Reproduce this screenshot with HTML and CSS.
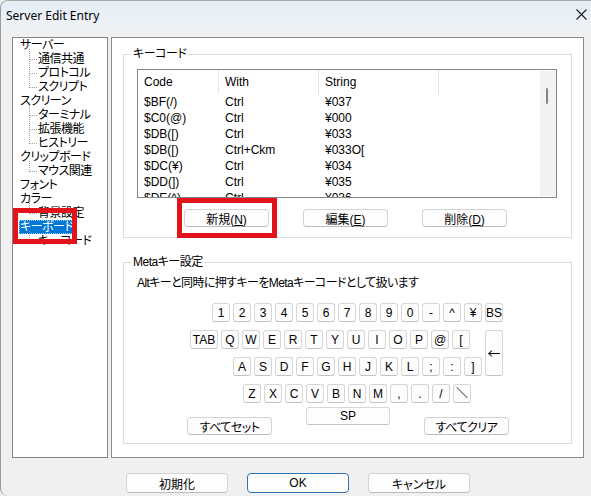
FILE: index.html
```
<!DOCTYPE html>
<html lang="ja">
<head>
    <meta charset="UTF-8">
    <meta name="viewport" content="width=device-width, initial-scale=1.0">
    <title>Server Edit Entry</title>
    <link rel="stylesheet" href="styles.css">
</head>
<body>
    <div class="window">
        <div class="titlebar">
            <span class="title">Server Edit Entry</span>
            <svg class="close" width="11" height="11" viewBox="0 0 11 11">
                <path d="M0.5 0.5L10.5 10.5M10.5 0.5L0.5 10.5" stroke="#1b1b1b" stroke-width="1.1" fill="none"/>
            </svg>
        </div>

        <div class="main">
            <div class="tree-box">
                <ul class="tree">
                    <li>サーバー
                        <ul>
                            <li>通信共通</li>
                            <li>プロトコル</li>
                            <li>スクリプト</li>
                        </ul>
                    </li>
                    <li>スクリーン
                        <ul>
                            <li>ターミナル</li>
                            <li>拡張機能</li>
                            <li>ヒストリー</li>
                        </ul>
                    </li>
                    <li>クリップボード
                        <ul>
                            <li>マウス関連</li>
                        </ul>
                    </li>
                    <li>フォント</li>
                    <li>カラー
                        <ul>
                            <li>背景設定</li>
                        </ul>
                    </li>
                    <li><span class="selected">キーボード</span>
                        <ul>
                            <li>キーコード</li>
                        </ul>
                    </li>
                </ul>
                <div class="mark mark-tree"></div>
            </div>

            <div class="panel">
                <fieldset class="group group-keycode">
                    <legend>キーコード</legend>
                    <div class="list">
                        <div class="list-body">
                            <div class="list-head"><span>Code</span><span>With</span><span>String</span></div>
                            <div class="list-row"><span>$BF(/)</span><span>Ctrl</span><span>¥037</span></div>
                            <div class="list-row"><span>$C0(@)</span><span>Ctrl</span><span>¥000</span></div>
                            <div class="list-row"><span>$DB([)</span><span>Ctrl</span><span>¥033</span></div>
                            <div class="list-row"><span>$DB([)</span><span>Ctrl+Ckm</span><span>¥033O[</span></div>
                            <div class="list-row"><span>$DC(¥)</span><span>Ctrl</span><span>¥034</span></div>
                            <div class="list-row"><span>$DD(])</span><span>Ctrl</span><span>¥035</span></div>
                            <div class="list-row"><span>$DE(^)</span><span>Ctrl</span><span>¥036</span></div>
                        </div>
                        <div class="scrollbar"><div class="thumb"></div></div>
                    </div>
                    <div class="btn-row">
                        <button class="btn">新規(<u>N</u>)</button>
                        <button class="btn">編集(<u>E</u>)</button>
                        <button class="btn">削除(<u>D</u>)</button>
                    </div>
                </fieldset>

                <fieldset class="group group-meta">
                    <legend>Metaキー設定</legend>
                    <div class="meta-desc">Altキーと同時に押すキーをMetaキーコードとして扱います</div>

                    <div class="kb-row kb-row1">
                        <button class="key">1</button><button class="key">2</button><button class="key">3</button>
                        <button class="key">4</button><button class="key">5</button><button class="key">6</button>
                        <button class="key">7</button><button class="key">8</button><button class="key">9</button>
                        <button class="key">0</button><button class="key">-</button><button class="key">^</button>
                        <button class="key">¥</button><button class="key">BS</button>
                    </div>

                    <div class="kb-mid">
                        <div class="kb-mid-rows">
                            <div class="kb-row">
                                <button class="key key-tab">TAB</button>
                                <button class="key">Q</button><button class="key">W</button><button class="key">E</button>
                                <button class="key">R</button><button class="key">T</button><button class="key">Y</button>
                                <button class="key">U</button><button class="key">I</button><button class="key">O</button>
                                <button class="key">P</button><button class="key">@</button><button class="key">[</button>
                            </div>
                            <div class="kb-row kb-row3">
                                <button class="key">A</button><button class="key">S</button><button class="key">D</button>
                                <button class="key">F</button><button class="key">G</button><button class="key">H</button>
                                <button class="key">J</button><button class="key">K</button><button class="key">L</button>
                                <button class="key">;</button><button class="key">:</button><button class="key">]</button>
                            </div>
                        </div>
                        <button class="key key-enter">←</button>
                    </div>

                    <div class="kb-row kb-row4">
                        <button class="key">Z</button><button class="key">X</button><button class="key">C</button>
                        <button class="key">V</button><button class="key">B</button><button class="key">N</button>
                        <button class="key">M</button><button class="key">,</button><button class="key">.</button>
                        <button class="key">/</button><button class="key">＼</button>
                    </div>

                    <div class="kb-bottom">
                        <button class="btn">すべてセット</button>
                        <button class="key key-sp">SP</button>
                        <button class="btn">すべてクリア</button>
                    </div>
                </fieldset>

                <div class="mark mark-new"></div>
            </div>
        </div>

        <div class="footer">
            <button class="btn">初期化</button>
            <button class="btn btn-default">OK</button>
            <button class="btn">キャンセル</button>
        </div>
    </div>
</body>
</html>
```

FILE: styles.css
```
body {
    margin: 0;
    background: #f0f0f0;
}

.window {
    width: 591px;
    height: 496px;
    box-sizing: border-box;
    border-left: 1px solid #9a9a9a;
    border-top: 1px solid #a8a8a8;
    border-radius: 8px 0 0 8px;
    background: #f0f0f0;
    overflow: hidden;
    font-family: "Liberation Sans", "Noto Sans CJK JP", sans-serif;
    font-size: 12px;
    font-feature-settings: "palt";
    color: #000;
}

button {
    font: inherit;
    font-feature-settings: "palt";
    color: #000;
    padding: 0;
    margin: 0;
    cursor: default;
}

/* title bar */

.titlebar {
    height: 29px;
    display: flex;
    align-items: center;
    justify-content: space-between;
    padding: 0 4px 0 5px;
    background: linear-gradient(#e4eef7, #eef2f6);
    font-family: "Noto Sans", sans-serif;
    font-size: 12px;
}

.close {
    margin-top: -3px;
}

/* main area */

.main {
    display: flex;
    gap: 3px;
    height: 421px;
    padding: 7px 0 0 11px;
}

.tree-box {
    position: relative;
    width: 96px;
    box-sizing: border-box;
    border: 1px solid #858585;
    background: #fff;
}

.tree,
.tree ul {
    list-style: none;
    margin: 0;
    padding: 0;
}

.tree {
    padding-left: 7px;
    line-height: 14px;
    letter-spacing: -0.5px;
    white-space: nowrap;
}

.tree ul li {
    position: relative;
    padding-left: 18px;
}

.tree ul li::before {
    content: "";
    position: absolute;
    left: 9px;
    top: -7px;
    width: 7px;
    height: 14px;
    border-left: 1px dotted #a0a0a0;
    border-bottom: 1px dotted #a0a0a0;
}

.tree ul li:first-child::before {
    top: -3px;
    height: 10px;
}

.selected {
    display: inline-block;
    margin-left: -1px;
    padding: 0 1px;
    background: #0078d7;
    color: #fff;
    outline: 1px dotted #9cc8ee;
    outline-offset: -1px;
}

.panel {
    position: relative;
    width: 473px;
    box-sizing: border-box;
    border: 1px solid #8a8a8a;
    background: #fff;
}

/* group boxes */

.group {
    width: 449px;
    box-sizing: border-box;
    margin: 0 0 0 11px;
    padding: 0;
    border: 1px solid #dcdcdc;
    min-width: 0;
}

.group legend {
    margin-left: 7px;
    padding: 0 2px;
    line-height: 14px;
    letter-spacing: -0.5px;
}

.group-keycode {
    margin-top: 9px;
    padding-bottom: 10px;
}

.group-meta {
    margin-top: 17px;
    padding-bottom: 8px;
}

/* key code list */

.list {
    display: flex;
    width: 420px;
    height: 129px;
    box-sizing: border-box;
    margin: 8px 0 0 13px;
    border: 1px solid #828790;
    background: #fff;
    overflow: hidden;
}

.list-body {
    flex: 1;
    overflow: hidden;
}

.list-head,
.list-row {
    display: grid;
    grid-template-columns: 81px 100px 120px;
}

.list-head {
    height: 24px;
    align-items: center;
    line-height: 24px;
}

.list-head span {
    border-right: 1px solid #e5e5e5;
    padding-left: 6px;
}

.list-row {
    height: 16px;
    line-height: 16px;
}

.list-row span {
    padding-left: 6px;
}

.scrollbar {
    width: 16px;
    margin: 1px 0;
    background: #f2f2f2;
}

.thumb {
    width: 2px;
    height: 16px;
    margin: 17px 0 0 6px;
    border-radius: 1px;
    background: #858585;
}

/* buttons */

.btn {
    background: #fdfdfd;
    border: 1px solid #d3d3d3;
    border-bottom-color: #bcbcbc;
    border-radius: 4px;
}

.btn u {
    text-underline-offset: 1px;
}

.btn-row {
    display: flex;
    gap: 34px;
    margin-top: 11px;
    padding-left: 60px;
}

.btn-row .btn {
    width: 85px;
    height: 18px;
}

/* meta keyboard */

.meta-desc {
    margin: 7px 0 0 13px;
    line-height: 14px;
    letter-spacing: -0.6px;
}

.kb-row {
    display: flex;
    gap: 3px;
}

.key {
    width: 18px;
    height: 19px;
    box-sizing: border-box;
    background: #fdfdfd;
    border: 1px solid #d6d6d6;
    border-bottom-color: #c2c2c2;
    border-radius: 3px;
    line-height: 16px;
    text-align: center;
}

.key-tab {
    width: 28px;
}

.kb-row1 {
    margin: 13px 0 0 88px;
}

.kb-mid {
    display: flex;
    gap: 3px;
    margin: 8px 0 0 66px;
}

.kb-mid-rows {
    display: flex;
    flex-direction: column;
    gap: 8px;
}

.kb-row3 {
    margin-left: 43px;
}

.key-enter {
    height: 46px;
    font-family: "Noto Sans CJK JP", sans-serif;
    font-size: 13px;
}

.kb-row4 {
    margin: 8px 0 0 119px;
}

.kb-bottom {
    display: flex;
    align-items: flex-start;
    gap: 34px;
    margin: 4px 0 0 63px;
}

.kb-bottom .btn {
    width: 85px;
    height: 18px;
    margin-top: 10px;
    letter-spacing: -0.5px;
}

.key-sp {
    width: 84px;
    height: 18px;
}

/* red annotation boxes */

.mark {
    position: absolute;
    box-sizing: border-box;
    border: 5px solid #e3131b;
}

.mark-tree {
    left: 0;
    top: 170px;
    width: 64px;
    height: 36px;
}

.mark-new {
    left: 65px;
    top: 160px;
    width: 100px;
    height: 40px;
}

/* footer */

.footer {
    display: flex;
    gap: 19px;
    padding: 15px 0 0 125px;
}

.footer .btn {
    width: 102px;
    height: 20px;
}

.btn-default {
    border-color: #2f74b5;
}
```
